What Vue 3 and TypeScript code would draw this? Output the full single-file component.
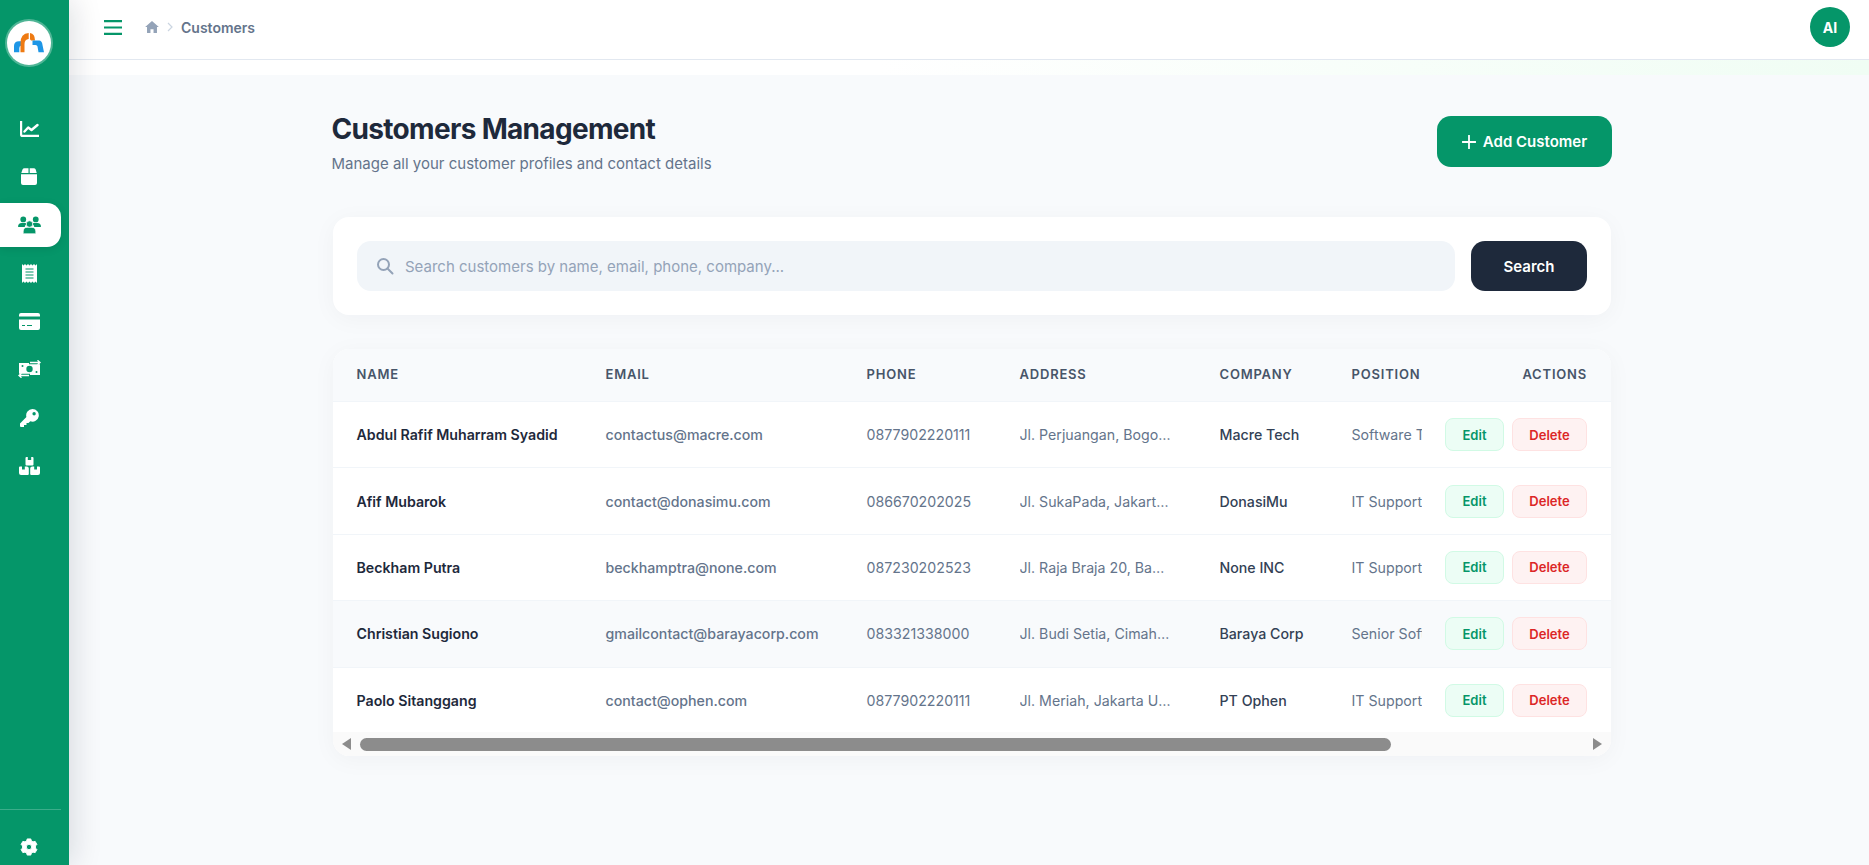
<script setup lang="ts">
interface Customer { name: string; email: string; phone: string; address: string; company: string; position: string }
const customers: Customer[] = [
  { name: 'Abdul Rafif Muharram Syadid', email: 'contactus@macre.com', phone: '0877902220111', address: 'Jl. Perjuangan, Bogor Barat', company: 'Macre Tech', position: 'Software Tester' },
  { name: 'Afif Mubarok', email: 'contact@donasimu.com', phone: '086670202025', address: 'Jl. SukaPada, Jakarta Timur', company: 'DonasiMu', position: 'IT Support' },
  { name: 'Beckham Putra', email: 'beckhamptra@none.com', phone: '087230202523', address: 'Jl. Raja Braja 20, Bandung', company: 'None INC', position: 'IT Support' },
  { name: 'Christian Sugiono', email: 'gmailcontact@barayacorp.com', phone: '083321338000', address: 'Jl. Budi Setia, Cimahi Utara', company: 'Baraya Corp', position: 'Senior Software' },
  { name: 'Paolo Sitanggang', email: 'contact@ophen.com', phone: '0877902220111', address: 'Jl. Meriah, Jakarta Utara', company: 'PT Ophen', position: 'IT Support' }
]
</script>

<template>
  <div class="app">
    <aside class="sidebar">
      <div class="logo">
        <svg width="30" height="20" viewBox="0 0 30 20">
          <path d="M0 19.300V13Q0 8.300 5 8.300H9.500V12.500H7.500Q5.300 12.500 5.300 15V19.300Z" fill="#1e96e6" />
          <path d="M6.500 19.300V10Q6.500 .5 14.700 0V6Q10.500 6.500 10.500 11V19.300Z" fill="#ee7a12" />
          <path d="M16 0Q21 .5 21 7.500H16Z" fill="#ee7a12" />
          <path d="M18.500 7.500H25Q28 7.500 28.500 12L30 19.300H24.500L23.500 13.500Q23.300 12 21.500 12H18.500Z" fill="#1e96e6" />
          <circle cx="15.300" cy="8" r="1.700" fill="#fff" />
        </svg>
      </div>
      <nav class="nav">
        <a class="item"><svg viewBox="0 0 19 16" width="19" height="16" fill="none" stroke="#fff" stroke-width="2.200"><path d="M1.100 0v13.400a1.500 1.500 0 0 0 1.500 1.500h16.400" /><path d="M4.500 10.500l3.700-4 3.300 2.500 6-5" stroke-linecap="round" stroke-linejoin="round" stroke-width="2.400" /></svg></a>
        <a class="item"><svg viewBox="0 0 16 17" width="16" height="17" fill="#fff"><path d="M.3 5 1.500 1.500Q2 .3 3.500 .3h4V5zM8.700 .3h4q1.500 0 2 1.200L15.700 5H8.700zM0 6.300h16V15q0 2-2 2H2q-2 0-2-2z" /></svg></a>
        <a class="item active"><svg viewBox="0 0 24 18" width="23" height="18" fill="#059669"><circle cx="5.500" cy="3.200" r="3" /><circle cx="18.500" cy="3.200" r="3" /><path d="M0 11q0-4 4-4h3.500q1 0 1.500 1-2 1.500-2 3H1q-1 0-1-1zM24 11q0-4-4-4h-3.500q-1 0-1.500 1 2 1.500 2 3h6q1 0 1-1z" /><circle cx="12" cy="8" r="3.400" stroke="#fff" stroke-width=".8" /><path d="M5.500 16q0-4.500 4-4.500h5q4 0 4 4.500v2h-13z" stroke="#fff" stroke-width=".6" /></svg></a>
        <a class="item"><svg viewBox="0 0 15 19" width="15" height="19"><path fill="#fff" d="M0 0l1.500 1.400L3 0l1.500 1.400L6 0l1.500 1.400L9 0l1.500 1.400L12 0l1.500 1.400L15 0v19l-1.500-1.400L12 19l-1.500-1.400L9 19l-1.500-1.400L6 19l-1.500-1.400L3 19l-1.500-1.400L0 19z" /><path d="M3.500 5h8M3.500 8h8M3.500 11h8M3.500 14h8" stroke="#059669" stroke-width="1.100" /></svg></a>
        <a class="item"><svg viewBox="0 0 21 17" width="21" height="17"><path fill="#fff" d="M2 0h17q2 0 2 2v1.500H0V2q0-2 2-2zM0 6.500h21V15q0 2-2 2H2q-2 0-2-2z" /><path d="M3 12.500h3M8 12.500h5" stroke="#059669" stroke-width="1.200" /></svg></a>
        <a class="item"><svg viewBox="0 0 23 18" width="23" height="18"><path fill="#fff" d="M1 3h21v12H1z" /><circle cx="11.500" cy="9" r="3.200" fill="#059669" /><circle cx="4.500" cy="6" r="1" fill="#059669" /><circle cx="18.500" cy="12" r="1" fill="#059669" /><path d="M11 2.500h12M12 15.500H0" stroke="#059669" stroke-width="3.500" /><path d="M12 2.500h10M19.500 .3 22 2.500l-2.500 2.200M11 15.500H1M3.500 13.300 1 15.500l2.500 2.200" fill="none" stroke="#fff" stroke-width="1.400" /></svg></a>
        <a class="item"><svg viewBox="0 0 19 18" width="19" height="18" fill="#fff"><path d="M12.500 0a6.300 6.300 0 1 1-2.200 12.200L8.500 14H6.500v2H4v2H1Q0 18 0 17v-2.500L6.400 8A6.300 6.300 0 0 1 12.500 0zm1.600 3a1.700 1.700 0 1 0 0 3.400 1.700 1.700 0 0 0 0-3.400z" fill-rule="evenodd" /></svg></a>
        <a class="item"><svg viewBox="0 0 21 18" width="21" height="18" fill="#fff"><path d="M6.500 1q0-1 1-1h1.300v3h3.400V0h1.300q1 0 1 1v6.500q0 1-1 1h-6q-1 0-1-1z" /><path d="M0 10.500q0-1 1-1h2v3h2.800v-3h2q2 0 2 2V17q0 1-1 1H2q-2 0-2-2z" /><path d="M11.200 11.500q0-2 2-2h2v3H18v-3h2q1 0 1 1V16q0 2-2 2h-6.800q-1 0-1-1z" /></svg></a>
      </nav>
      <div class="side-foot">
        <svg viewBox="0 0 20 20" width="18" height="18"><path fill="#fff" stroke="#fff" stroke-width="1" stroke-linejoin="round" fill-rule="evenodd" d="M8 1h4l.7 2.300 1.800 1 2.300-.6 2 3.400-1.600 1.700v2.400l1.600 1.700-2 3.400-2.300-.6-1.800 1L12 19H8l-.7-2.300-1.800-1-2.300.6-2-3.400 1.600-1.700V8.800L1.200 7.100l2-3.400 2.300.6 1.800-1zM10 7a3 3 0 1 0 0 6 3 3 0 0 0 0-6z" /></svg>
      </div>
    </aside>

    <div class="shell">
      <header class="topbar">
        <div class="top-left">
          <svg class="burger" viewBox="0 0 18 15" width="18" height="15"><path d="M0 1.200h18M0 7.500h18M0 13.800h18" stroke="#059669" stroke-width="2.200" /></svg>
          <svg class="home" viewBox="0 0 16 14" width="14" height="12"><path fill="#94a3b8" d="M8 0L0 7h2.200v7h4V9.500h3.600V14h4V7H16z" /></svg>
          <svg class="chev" viewBox="0 0 6 10" width="6" height="10" fill="none" stroke="#cbd5e1" stroke-width="1.200"><path d="M1 1l4 4-4 4" /></svg>
          <span class="crumb">Customers</span>
        </div>
        <div class="avatar">AI</div>
      </header>
      <div class="band"></div>

      <main class="main">
        <div class="container">
          <div class="head">
            <div class="title">
              <h1>Customers Management</h1>
              <p>Manage all your customer profiles and contact details</p>
            </div>
            <button class="add">
              <svg viewBox="0 0 14 14" width="14" height="14"><path d="M7 .5v13M.5 7h13" stroke="#fff" stroke-width="1.800" stroke-linecap="round" /></svg>
              Add Customer
            </button>
          </div>

          <section class="search-card">
            <div class="search-input">
              <svg viewBox="0 0 18 18" width="18" height="18" fill="none" stroke="#94a3b8" stroke-width="2"><circle cx="7.500" cy="7.500" r="5.500" /><path d="M11.500 11.500L16.500 16.500" stroke-linecap="round" /></svg>
              <span>Search customers by name, email, phone, company...</span>
            </div>
            <button class="search-btn">Search</button>
          </section>

          <section class="table-card">
            <div class="table-head row">
              <div class="c-name">Name</div>
              <div class="c-email">Email</div>
              <div class="c-phone">Phone</div>
              <div class="c-addr">Address</div>
              <div class="c-comp">Company</div>
              <div class="c-pos">Position</div>
              <div class="c-act">Actions</div>
            </div>
            <div v-for="(c, i) in customers" :key="c.name" class="row body-row" :class="{ hover: i === 3 }">
              <div class="c-name strong">{{ c.name }}</div>
              <div class="c-email em">{{ c.email }}</div>
              <div class="c-phone">{{ c.phone }}</div>
              <div class="c-addr ell">{{ c.address }}</div>
              <div class="c-comp strong2">{{ c.company }}</div>
              <div class="c-pos clip">{{ c.position }}</div>
              <div class="c-act btns">
                <button class="edit">Edit</button>
                <button class="del">Delete</button>
              </div>
            </div>
            <div class="scrollbar">
              <i class="arrow left"></i>
              <div class="thumb"></div>
              <i class="arrow right"></i>
            </div>
          </section>
        </div>
      </main>
    </div>
  </div>
</template>

<style>
html, body { margin: 0; padding: 0; background: #f8fafc; overflow: hidden; }
</style>

<style scoped>
* { box-sizing: border-box; }
.app { display: flex; width: 1869px; height: 865px; overflow: hidden; font-family: Inter, "Noto Sans", sans-serif; background: #f8fafc; }
.sidebar { width: 69px; flex: none; background: #059669; display: flex; flex-direction: column; position: relative; z-index: 2; box-shadow: 4px 0 30px rgba(15, 23, 42, .14); }
.logo { width: 44px; height: 44px; margin: 21px 0 0 7px; border-radius: 50%; background: #fff; box-shadow: 0 0 0 2px rgba(255, 255, 255, .3); display: flex; align-items: center; justify-content: center; flex: none; }
.nav { margin-top: 41.500px; display: flex; flex-direction: column; gap: 4.200px; flex: 1; }
.item { width: 61px; height: 44px; display: flex; align-items: center; justify-content: center; padding-right: 3px; border-radius: 0 14px 14px 0; }
.item.active { background: #fff; box-shadow: 0 2px 8px rgba(0, 0, 0, .1); }
.side-foot { height: 56.500px; width: 61px; border-top: 1px solid rgba(255, 255, 255, .22); display: flex; align-items: center; justify-content: center; padding: 19px 3px 0 0; }
.shell { flex: 1; min-width: 0; display: flex; flex-direction: column; }
.topbar { height: 60px; flex: none; background: #fff; border-bottom: 1px solid #e2e8f0; display: flex; align-items: center; justify-content: space-between; padding: 0 19px 5px 35px; }
.top-left { display: flex; align-items: center; gap: 0; }
.burger { margin-right: 23px; }
.chev { margin: 0 8px 0 8px; }
.crumb { font-size: 14px; font-weight: 600; color: #64748b; }
.avatar { width: 40px; height: 40px; border-radius: 50%; background: #059669; color: #fff; font-size: 14px; font-weight: 700; display: flex; align-items: center; justify-content: center; }
.band { height: 15px; flex: none; background: linear-gradient(90deg, #fff 0%, #fff 45%, #f0fdf4 100%); }
.main { flex: 1; min-height: 0; padding: 0 0 0 263px; }
.container { width: 1280px; }
.head { display: flex; justify-content: space-between; align-items: flex-start; height: 142px; padding-top: 37px; }
.title { margin-left: -.5px; }
h1 { margin: 0; font-size: 28px; line-height: 34px; font-weight: 700; color: #1e293b; letter-spacing: -.68px; }
p { margin: 7px 0 0; font-size: 15px; line-height: 22px; color: #64748b; }
button { font-family: inherit; border: 0; cursor: pointer; }
.add { margin: 4px 0 0; width: 175px; height: 51px; border-radius: 14px; background: #059669; color: #fff; font-size: 15px; font-weight: 600; display: flex; align-items: center; justify-content: center; gap: 7px; }
.search-card { width: 1278px; margin-left: 1px; height: 98px; background: #fff; border-radius: 16px; padding: 24px; display: flex; gap: 16px; box-shadow: 0 4px 24px rgba(15, 23, 42, .04); }
.search-input { flex: 1; height: 50px; border-radius: 14px; background: #f1f5f9; display: flex; align-items: center; gap: 11px; padding-left: 19px; font-size: 15px; color: #94a3b8; }
.search-btn { width: 116px; height: 50px; border-radius: 14px; background: #1e293b; color: #fff; font-size: 15px; font-weight: 600; }
.table-card { width: 1278px; margin: 34px 0 0 1px; height: 407px; background: #fff; border-radius: 16px; overflow: hidden; box-shadow: 0 4px 24px rgba(15, 23, 42, .04); }
.row { display: flex; align-items: center; padding-left: 23.500px; font-size: 14.200px; color: #64748b; }
.table-head { height: 53px; padding-bottom: 2px; background: #f8fafc; border-bottom: 1px solid #f1f5f9; font-size: 13px; font-weight: 600; letter-spacing: .8px; text-transform: uppercase; color: #475569; }
.body-row { height: 66.400px; border-bottom: 1px solid #f1f5f9; }
.body-row:last-of-type { border-bottom: 0; }
.body-row.hover { background: #f8fafc; }
.c-name { width: 249px; flex: none; }
.c-email { width: 261px; flex: none; }
.c-phone { width: 153px; flex: none; }
.c-addr { width: 200px; flex: none; padding-right: 48px; }
.c-comp { width: 132px; flex: none; }
.c-pos { width: 70px; flex: none; }
.c-act { width: 165.500px; flex: none; text-align: right; }
.strong { font-weight: 600; color: #1e293b; }
.strong2 { font-weight: 500; color: #334155; }
.em { font-weight: 500; color: #64748b; }
.ell { overflow: hidden; white-space: nowrap; text-overflow: ellipsis; }
.clip { overflow: hidden; white-space: nowrap; }
.btns { display: flex; justify-content: flex-end; gap: 8px; }
.edit, .del { height: 33px; border-radius: 8px; font-size: 13px; font-weight: 600; padding: 0; }
.edit { width: 59px; background: #ecfdf5; border: 1px solid #d1fae5; color: #059669; }
.del { width: 75px; background: #fef2f2; border: 1px solid #fee2e2; color: #dc2626; }
.scrollbar { height: 24px; background: #fafafa; margin-top: -2px; position: relative; display: flex; align-items: center; padding: 0 9px; justify-content: space-between; }
.thumb { position: absolute; left: 27px; top: 6px; height: 13px; width: 1031px; border-radius: 7px; background: #8c8c8c; }
.arrow { width: 0; height: 0; border-top: 6px solid transparent; border-bottom: 6px solid transparent; }
.arrow.left { border-right: 9px solid #8c8c8c; }
.arrow.right { border-left: 9px solid #8c8c8c; }
</style>
